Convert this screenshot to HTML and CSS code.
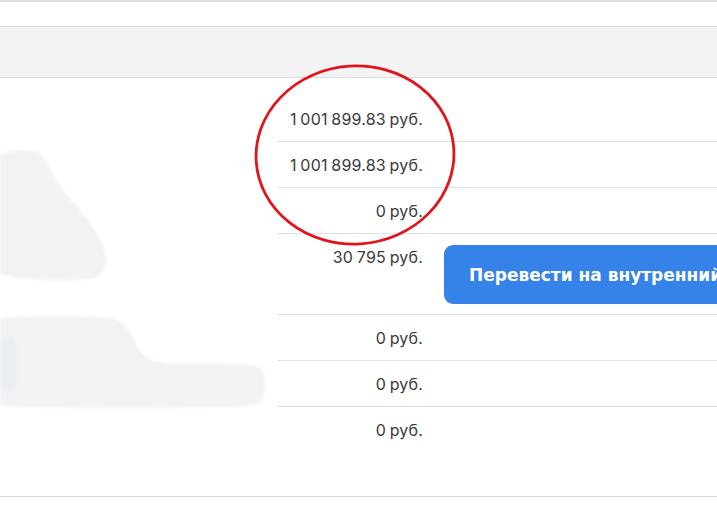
FILE: index.html
```html
<!DOCTYPE html>
<html lang="ru">
<head>
<meta charset="utf-8">
<title>Баланс</title>
<link rel="stylesheet" href="styles.css">
</head>
<body>
<div class="page">
  <div class="topbar"></div>
  <div class="thead"></div>
  <div class="tbody">
    <div class="row"><div class="lbl"></div><div class="rest"><div class="val">1 001 899.83 руб.</div><div class="act"></div></div></div>
    <div class="row"><div class="lbl"></div><div class="rest"><div class="val">1 001 899.83 руб.</div><div class="act"></div></div></div>
    <div class="row"><div class="lbl"></div><div class="rest"><div class="val">0 руб.</div><div class="act"></div></div></div>
    <div class="row"><div class="lbl"></div><div class="rest tall"><div class="val">30 795 руб.</div><div class="act"><button class="btn">Перевести на внутренний</button></div></div></div>
    <div class="row"><div class="lbl"></div><div class="rest"><div class="val">0 руб.</div><div class="act"></div></div></div>
    <div class="row"><div class="lbl"></div><div class="rest"><div class="val">0 руб.</div><div class="act"></div></div></div>
    <div class="row last"><div class="lbl"></div><div class="rest"><div class="val">0 руб.</div><div class="act"></div></div></div>
  </div>

  <svg class="blobs" width="300" height="300" viewBox="0 0 300 300" aria-hidden="true">
    <defs>
      <filter id="soft" x="-10%" y="-10%" width="120%" height="120%"><feGaussianBlur stdDeviation="1.5"/></filter>
    </defs>
    <g filter="url(#soft)" fill="#f1f2f3">
      <path d="M0 6 C6 1 14 0 24 0 C36 0 46 6 50 18 C56 32 66 44 78 58 C90 72 104 90 106 108 C108 122 100 128 88 129 C60 131 30 131 0 124 Z"/>
      <path d="M0 168 C30 166 80 165 110 168 C124 170 130 180 134 190 C138 202 148 211 166 213 C200 214 236 213 256 216 C266 220 268 236 262 250 C256 256 240 257 220 257 C160 258 90 258 30 257 C14 257 4 256 0 256 Z"/>
    </g>
    <rect x="0" y="186" width="16" height="56" rx="6" fill="#e9eef3" filter="url(#soft)" opacity="0.8"/>
  </svg>

  <svg class="ring" width="220" height="200" viewBox="0 0 220 200" aria-hidden="true">
    <ellipse cx="110" cy="100" rx="99" ry="89" transform="rotate(-4 110 100)" fill="none" stroke="#e3131b" stroke-width="2.8"/>
  </svg>
</div>
</body>
</html>
```

FILE: styles.css
```css
* { box-sizing: border-box; }

html, body {
  margin: 0;
  padding: 0;
  background: #ffffff;
  overflow: hidden;
}

body {
  font-family: Inter, "Noto Sans", "Liberation Sans", sans-serif;
  color: #3a3a3a;
}

.page {
  position: relative;
  width: 717px;
  height: 531px;
  overflow: hidden;
}

.topbar {
  height: 27px;
  border-top: 2px solid #dedede;
  border-bottom: 1px solid #dcdcdc;
}

.thead {
  height: 51px;
  background: #f3f3f3;
  border-bottom: 1px solid #dcdcdc;
}

.tbody {
  padding-top: 18px;
  padding-bottom: 43px;
  border-bottom: 1px solid #dcdcdc;
}

.row {
  display: flex;
}

.lbl {
  width: 277px;
  flex: none;
}

.rest {
  flex: 1;
  display: flex;
  align-items: flex-start;
  height: 46px;
  border-bottom: 1px solid #e2e2e2;
}

.rest.tall {
  height: 81px;
}

.row.last .rest {
  border-bottom: none;
}

.val {
  width: 146px;
  flex: none;
  text-align: right;
  padding-top: 13px;
  font-size: 16px;
  line-height: 20px;
  letter-spacing: 0.2px;
  word-spacing: -1px;
  white-space: nowrap;
}

.act {
  flex: 1;
  padding-left: 21px;
  padding-top: 11px;
  min-width: 0;
}

.btn {
  display: block;
  height: 59px;
  width: 320px;
  padding: 0 0 0 25px;
  border: none;
  border-radius: 9px;
  background: #3582e9;
  color: #ffffff;
  font-family: "DejaVu Sans", Inter, sans-serif;
  font-weight: 700;
  font-size: 17px;
  text-align: left;
  white-space: nowrap;
  overflow: hidden;
}

.blobs {
  position: absolute;
  left: 0;
  top: 150px;
}

.ring {
  position: absolute;
  left: 245px;
  top: 55px;
}
```
